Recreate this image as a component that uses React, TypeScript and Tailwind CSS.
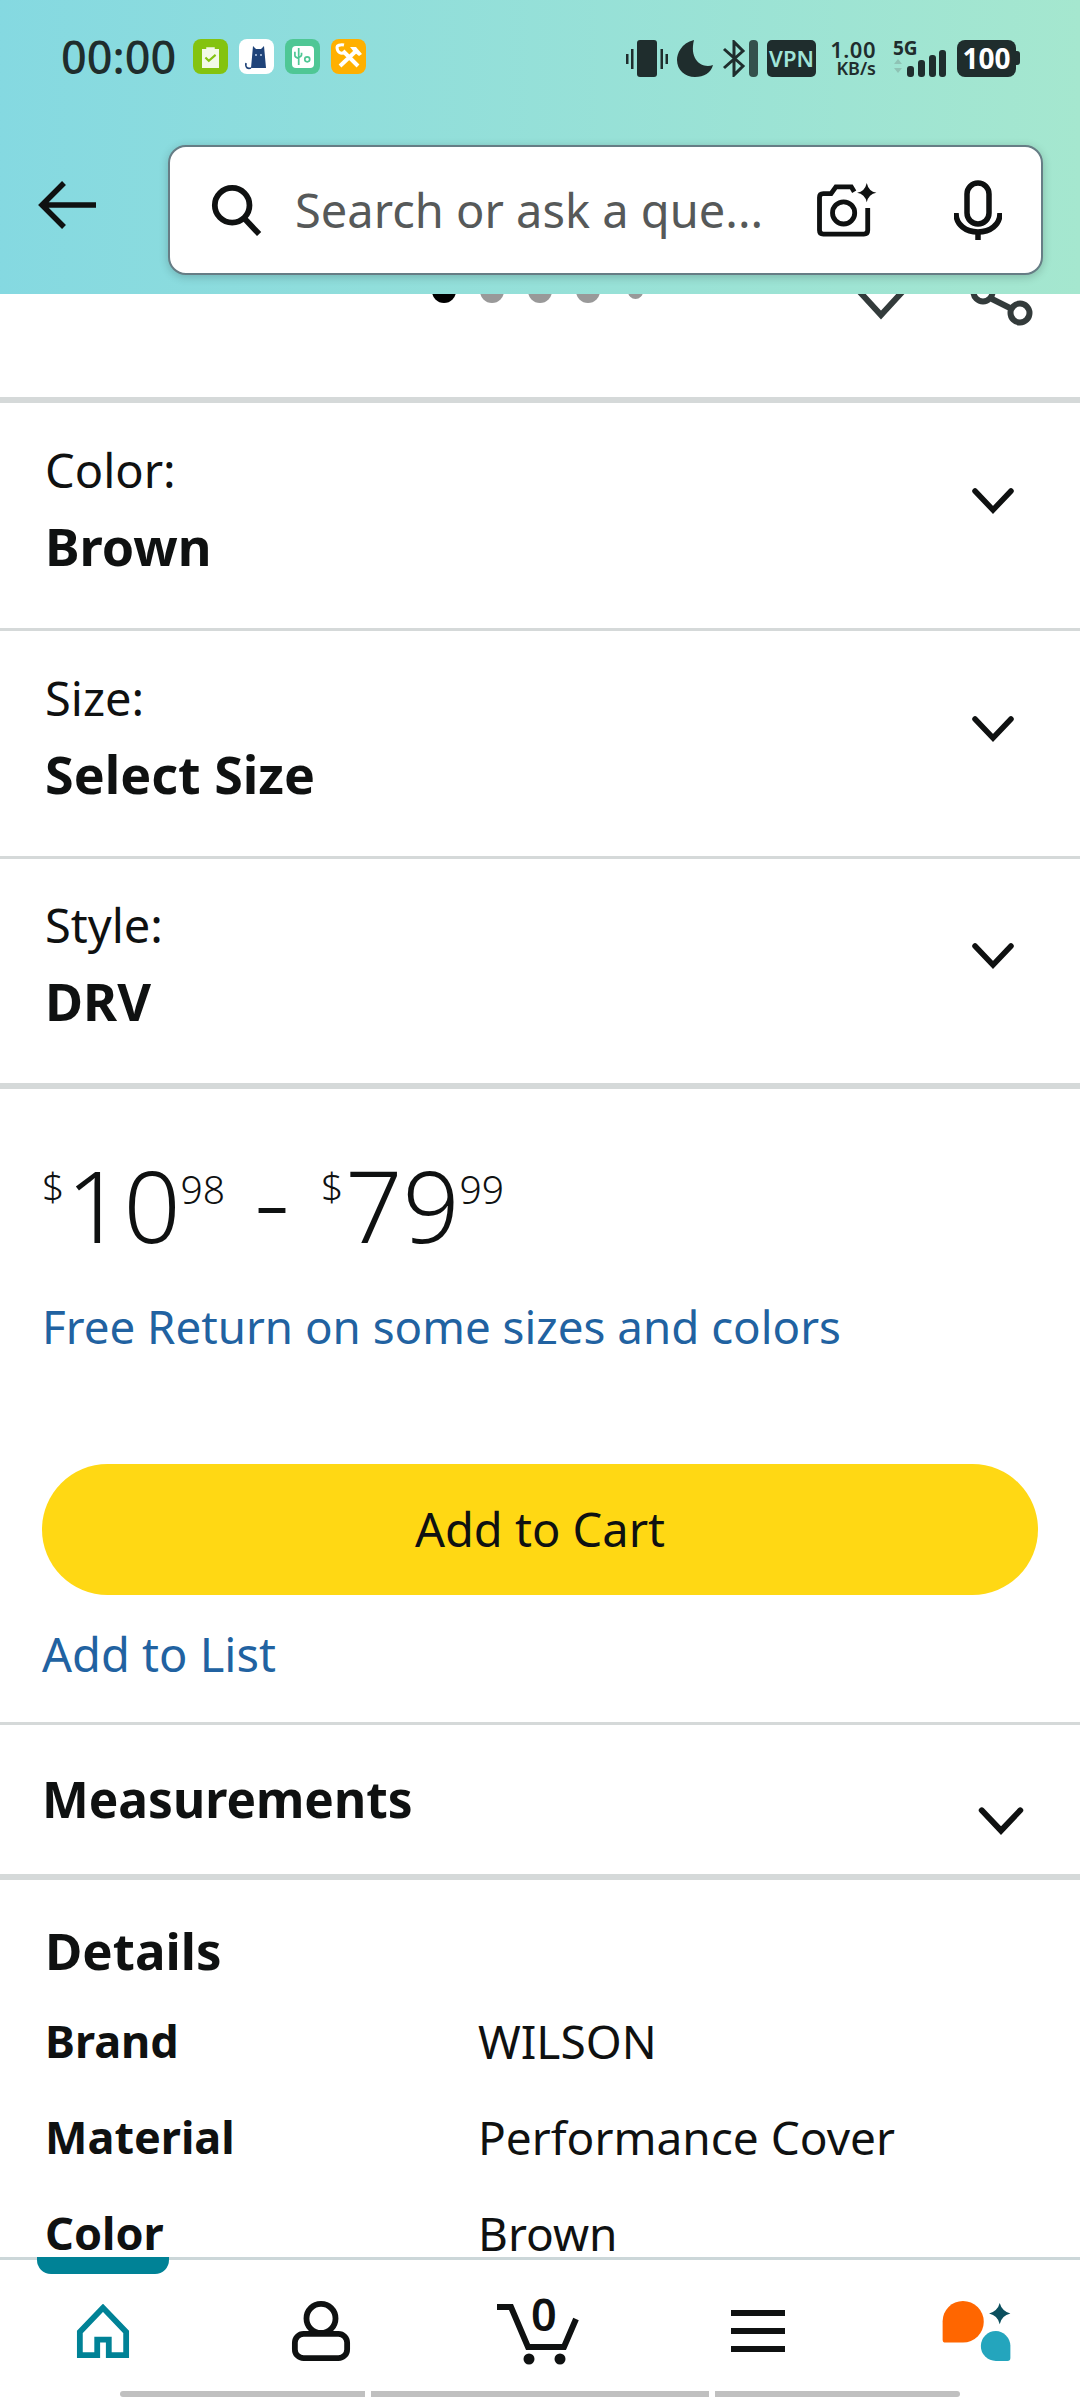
import React from "react";

const font = { fontFamily: '"Noto Sans", "Open Sans", sans-serif' };

const Chevron = ({ className = "" }: { className?: string }) => (
  <svg viewBox="0 0 44 28" className={className} fill="none" stroke="#0f1111" strokeWidth="5.5" strokeLinecap="round">
    <path d="M4 4 L22 23 L40 4" />
  </svg>
);

const AppIcons = () => (
  <div className="flex items-center gap-[11px] ml-[17px]">
    <div className="w-[35px] h-[35px] rounded-[8px] bg-[#84c30f] flex items-center justify-center">
      <svg viewBox="0 0 20 23" className="w-[17px] h-[22px]">
        <path d="M0 2h5V0h10v2h5v23H0z" fill="#f3f9e8" />
        <path d="M4 12l4 4 8-7" fill="none" stroke="#84c30f" strokeWidth="2.4" />
      </svg>
    </div>
    <div className="w-[35px] h-[35px] rounded-[8px] bg-white flex items-center justify-center">
      <svg viewBox="0 0 28 28" className="w-[28px] h-[28px]">
        <path d="M10 3l3 3h5l3-3 2 22H8z" fill="#1f4379" />
        <path d="M8 25c-3 1-6 0-5-5" fill="none" stroke="#1f4379" strokeWidth="1.6" />
        <circle cx="13" cy="12" r="0.9" fill="#cfe0f5" />
        <circle cx="18" cy="12" r="0.9" fill="#cfe0f5" />
      </svg>
    </div>
    <div className="w-[35px] h-[35px] rounded-[8px] bg-[#4fc795] flex items-center justify-center">
      <div className="w-[22px] h-[22px] rounded-[4px] bg-white flex items-center justify-center">
        <svg viewBox="0 0 20 20" className="w-[19px] h-[19px]" fill="none" stroke="#4fc795" strokeWidth="1.8">
          <path d="M6 1v18M2 5v4c0 2 4 3 4 3M6 11s3-1 3-3V6" />
          <circle cx="15" cy="13" r="2.6" />
        </svg>
      </div>
    </div>
    <div className="w-[35px] h-[35px] rounded-[8px] bg-[#ffb000] flex items-center justify-center">
      <svg viewBox="0 0 28 28" className="w-[28px] h-[28px]" fill="none" stroke="#ffffff" strokeWidth="4">
        <path d="M8 8l15 15M21 8L5 23" />
        <path d="M2 4c0 5 4 8 8 5M9 2C5 1 2 3 2 4" strokeWidth="3" />
        <path d="M15 4h6l6 7-3 2-5-4z" fill="#ffffff" stroke="none" />
      </svg>
    </div>
  </div>
);

const StatusIcons = () => (
  <div className="flex items-center text-[#1f2d2d]">
    <svg viewBox="0 0 42 37" className="w-[42px] h-[37px]" fill="#1f2d2d">
      <rect x="11" y="0" width="20" height="37" rx="3" />
      <rect x="0" y="14" width="2.5" height="10" />
      <rect x="5" y="9" width="2.5" height="20" />
      <rect x="34.5" y="9" width="2.5" height="20" />
      <rect x="39.5" y="14" width="2.5" height="10" />
    </svg>
    <svg viewBox="0 0 36 37" className="w-[36px] h-[37px] ml-[9px]" fill="#1f2d2d">
      <path d="M17 0 C4 3 0 14 0 20 C0 30 8 37 18 37 C27 37 34 33 36 25 C25 29 12 20 17 0z" />
    </svg>
    <svg viewBox="0 0 24 37" className="w-[24px] h-[37px] ml-[9px]" fill="none" stroke="#1f2d2d" strokeWidth="3">
      <path d="M2 9 L21 26 L12 35 V2 L21 11 L2 28" />
    </svg>
    <div className="w-[9px] h-[37px] rounded-[4px] bg-[#34504c] ml-[3px]" />
    <div className="w-[49px] h-[37px] rounded-[5px] bg-[#1f2d2d] ml-[9px] flex items-center justify-center text-[22px] leading-none font-semibold text-[#a0e4d8]">
      VPN
    </div>
    <div className="flex flex-col items-end ml-[17px] w-[43px] font-semibold">
      <span className="text-[22px] leading-[20px] tracking-[0.5px]">1.00</span>
      <span className="text-[18px] leading-[18px]">KB/s</span>
    </div>
    <div className="flex flex-col ml-[17px] w-[53px] h-[37px] relative">
      <span className="text-[19px] leading-[16px] font-bold">5G</span>
      <svg viewBox="0 0 53 37" className="absolute inset-0 w-[53px] h-[37px]" fill="#1f2d2d">
        <path d="M1 24l4-5 4 5zM1 28l4 5 4-5z" fill="#8fc3b5" />
        <rect x="14" y="26" width="7" height="11" rx="3" />
        <rect x="25" y="20" width="7" height="17" rx="3" />
        <rect x="36" y="15" width="7" height="22" rx="3" />
        <rect x="46" y="10" width="7" height="27" rx="3" />
      </svg>
    </div>
    <div className="w-[59px] h-[37px] rounded-[8px] bg-[#1f2d2d] ml-[11px] flex items-center justify-center text-[28px] leading-none font-bold text-white">
      100
    </div>
    <div className="w-[4px] h-[14px] rounded-r-[3px] bg-[#1f2d2d]" />
  </div>
);

const SearchBar = () => (
  <div className="w-[875px] h-[130px] rounded-[18px] bg-white border-[2.5px] border-[#667d85] shadow-[0_2px_10px_rgba(0,0,0,0.2)] flex items-center pl-[40px] pr-[39px]">
    <svg viewBox="0 0 52 54" className="w-[52px] h-[52px] shrink-0" fill="none" stroke="#0f1111" strokeWidth="6">
      <circle cx="22" cy="22" r="18" />
      <path d="M34 35 L50 52" />
    </svg>
    <span className="ml-[33px] text-[47px] leading-none text-[#565959] flex-1 whitespace-nowrap">
      Search or ask a que...
    </span>
    <svg viewBox="0 0 62 56" className="w-[61px] h-[54px] shrink-0" fill="none" stroke="#0f1111" strokeWidth="5">
      <path d="M39 9 L36 4 H20 L15 11 H7 Q3 11 3 15 V49 Q3 53 7 53 H49 Q53 53 53 49 V26" />
      <circle cx="28" cy="31" r="11.5" />
      <path d="M52 0 Q54 9 62 10 Q54 11 52 20 Q50 11 42 10 Q50 9 52 0z" fill="#0f1111" stroke="none" />
    </svg>
    <svg viewBox="0 0 48 60" className="w-[48px] h-[60px] ml-[77px] shrink-0" fill="none" stroke="#0f1111" strokeWidth="5.5">
      <rect x="13" y="3" width="22" height="41" rx="11" />
      <path d="M2 33 C2 45 12 52 24 52 C36 52 46 45 46 33" />
      <path d="M24 52 V60" />
    </svg>
  </div>
);

const Header = () => (
  <div className="relative z-10 h-[294px] shrink-0 bg-gradient-to-r from-[#85d9e1] to-[#a5e7cf]">
    <div className="h-[145px] flex items-start justify-between pt-[39px] pl-[61px] pr-[60px]">
      <div className="flex items-center h-[35px]">
        <span className="text-[45px] leading-[35px] font-medium text-[#1f2d2d]">00:00</span>
        <AppIcons />
      </div>
      <StatusIcons />
    </div>
    <div className="flex items-center pl-[38px]">
      <svg viewBox="0 0 58 48" className="w-[58px] h-[48px] shrink-0 mr-[72px] -mt-[11px]" fill="none" stroke="#0f1111" strokeWidth="5.5">
        <path d="M26 2 L4 24 L26 46 M4 24 H58" />
      </svg>
      <SearchBar />
    </div>
  </div>
);

const Carousel = () => (
  <div className="h-[109px] shrink-0 border-b-[6px] border-[#d5d9d9] relative">
    <div className="flex items-center gap-[24px] -mt-[15px] ml-[432px]">
      <div className="w-[24px] h-[24px] rounded-full bg-black" />
      <div className="w-[24px] h-[24px] rounded-full bg-[#999999]" />
      <div className="w-[24px] h-[24px] rounded-full bg-[#999999]" />
      <div className="w-[24px] h-[24px] rounded-full bg-[#999999]" />
      <div className="w-[15px] h-[15px] rounded-full bg-[#999999] ml-[4px]" />
    </div>
    <svg viewBox="0 0 190 40" className="absolute left-[850px] top-0 w-[190px] h-[40px]" fill="none" stroke="#333b3b" strokeWidth="6">
      <path d="M8 -4 L31 21 L54 -4" />
      <path d="M142 5 L162 15" />
      <circle cx="133" cy="-2" r="9.500" />
      <circle cx="170" cy="19" r="9.500" />
    </svg>
  </div>
);

const VariantRow = ({ label, value, thick }: { label: string; value: string; thick?: boolean }) => (
  <div
    className={`shrink-0 flex items-center justify-between pl-[45px] pr-[65px] border-[#d5d9d9] ${
      thick ? "h-[230px] border-b-[6px]" : "h-[228px] border-b-[3px]"
    }`}
  >
    <div className="flex flex-col text-[#0f1111] -mt-[16px]">
      <span className="text-[47px] leading-[76px]">{label}</span>
      <span className="text-[52px] leading-[76px] font-bold">{value}</span>
    </div>
    <Chevron className="w-[44px] h-[28px] -mt-[30px]" />
  </div>
);

const Price = ({ whole, cents }: { whole: string; cents: string }) => (
  <span className="flex items-start">
    <span className="text-[39px] leading-none font-light mt-[12px] mr-[2px]">$</span>
    <span className="text-[100px] leading-none font-light">{whole}</span>
    <span className="text-[39px] leading-none font-light mt-[15px]">{cents}</span>
  </span>
);

const DetailRow = ({ label, value }: { label: string; value: string }) => (
  <div className="flex h-[96px] items-center text-[#0f1111] shrink-0">
    <span className="w-[433px] text-[45px] font-bold leading-[40px]">{label}</span>
    <span className="text-[46px] leading-[40px]">{value}</span>
  </div>
);

const Content = () => (
  <div className="flex-1 min-h-0 overflow-hidden flex flex-col">
    <Carousel />
    <VariantRow label="Color:" value="Brown" />
    <VariantRow label="Size:" value="Select Size" />
    <VariantRow label="Style:" value="DRV" thick />
    <div className="pl-[42px] pr-[42px] pt-[65px] shrink-0">
      <div className="flex items-start text-[#0f1111] h-[99px]">
        <Price whole="10" cents="98" />
        <span className="text-[64px] leading-none mt-[18px] ml-[31px] mr-[33px]">–</span>
        <Price whole="79" cents="99" />
      </div>
      <div className="text-[45.7px] leading-[60px] text-[#2162a1] mt-[43px]">Free Return on some sizes and colors</div>
      <div className="h-[131px] mt-[108px] rounded-full bg-[#ffd814] flex items-center justify-center text-[47px] text-[#0f1111]">
        Add to Cart
      </div>
      <div className="text-[47px] leading-[60px] text-[#2162a1] mt-[29px]">Add to List</div>
    </div>
    <div className="h-[158px] mt-[38px] shrink-0 border-t-[3px] border-b-[6px] border-[#d5d9d9] flex items-center justify-between pl-[42px] pr-[55px]">
      <span className="text-[49.6px] font-bold text-[#0f1111] leading-none">Measurements</span>
      <Chevron className="w-[48px] h-[30px] mt-[42px]" />
    </div>
    <div className="pl-[45px] pt-[40px]">
      <div className="text-[51px] leading-[60px] font-bold text-[#0f1111] mb-[13px]">Details</div>
      <DetailRow label="Brand" value="WILSON" />
      <DetailRow label="Material" value="Performance Cover" />
      <DetailRow label="Color" value="Brown" />
    </div>
  </div>
);

const BottomNav = () => (
  <div className="relative h-[143px] shrink-0 bg-white border-t-[3px] border-[#ccd7d9]">
    <div className="absolute left-[37px] -top-[3px] w-[132px] h-[17px] bg-[#008296] rounded-b-[14px]" />
    <div className="flex items-start pl-[76px] pt-[41px]">
      <svg viewBox="0 0 54 56" className="w-[54px] h-[54px] mt-[3px]" fill="none" stroke="#008296" strokeWidth="6">
        <path d="M27 4 L3 29 V53 H21 V37 H33 V53 H51 V29z" />
      </svg>
      <svg viewBox="0 0 60 62" className="w-[60px] h-[60px] ml-[161px]" fill="none" stroke="#0f1111" strokeWidth="6">
        <circle cx="30" cy="18" r="15" />
        <rect x="3" y="34" width="54" height="25" rx="9" />
      </svg>
      <div className="relative w-[82px] h-[72px] ml-[146px] -mt-[6px]">
        <svg viewBox="0 0 82 72" className="w-[82px] h-[72px]" fill="none" stroke="#0f1111" strokeWidth="6">
          <path d="M0 12 H14 L31 52 H67 L79 24" />
          <circle cx="32" cy="64" r="5.500" fill="#0f1111" stroke="none" />
          <circle cx="63" cy="64" r="5.500" fill="#0f1111" stroke="none" />
        </svg>
        <span className="absolute left-[34px] -top-[7px] text-[45px] leading-[52px] font-semibold text-[#0f1111]">0</span>
      </div>
      <div className="flex flex-col gap-[12px] w-[54px] ml-[152px] mt-[9px]">
        <div className="h-[6px] bg-[#0f1111]" />
        <div className="h-[6px] bg-[#0f1111]" />
        <div className="h-[6px] bg-[#0f1111]" />
      </div>
      <svg viewBox="0 0 70 62" className="w-[69px] h-[60px] ml-[157px]">
        <path d="M21 0 A21 21 0 0 1 21 43 H3 Q0 43 0 40 V21 A21 21 0 0 1 21 0z" fill="#ff6600" />
        <path d="M55 31 A15.500 15.500 0 0 1 70 46 V59 Q70 62 67 62 H55 A15.500 15.500 0 0 1 55 31z" fill="#24a5bd" />
        <path d="M59 2 Q61 10 70 13 Q61 15 59 24 Q57 15 48 13 Q57 10 59 2z" fill="#0b4f5e" />
      </svg>
    </div>
    <div className="absolute bottom-[3px] left-[120px] flex gap-[6px]">
      <div className="w-[245px] h-[6px] bg-[#c0c0c0] rounded-l-full" />
      <div className="w-[338px] h-[6px] bg-[#c0c0c0]" />
      <div className="w-[245px] h-[6px] bg-[#c0c0c0] rounded-r-full" />
    </div>
  </div>
);

export default function App() {
  return (
    <div className="w-[1080px] h-[2400px] bg-white flex flex-col overflow-hidden" style={font}>
      <Header />
      <Content />
      <BottomNav />
    </div>
  );
}
